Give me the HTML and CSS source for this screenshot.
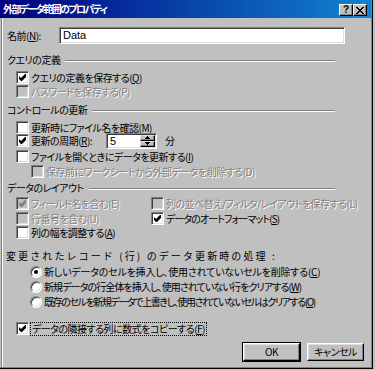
FILE: index.html
```html
<!DOCTYPE html>
<html lang="ja">
<head>
<meta charset="utf-8">
<title>外部データ範囲のプロパティ</title>
<link rel="stylesheet" href="styles.css">
</head>
<body>
<div class="window">
  <div class="inner">
    <div class="titlebar">
      <span class="title">外部データ範囲のプロパティ</span>
      <div class="tbtns">
        <span class="tbtn help">?</span>
        <span class="tbtn close"><svg width="8" height="7" viewBox="0 0 8 7" shape-rendering="crispEdges"><path d="M0 0h2v1H0zM6 0h2v1H6zM1 1h2v1H1zM5 1h2v1H5zM2 2h4v1H2zM3 3h2v1H3zM2 4h4v1H2zM1 5h2v1H1zM5 5h2v1H5zM0 6h2v1H0zM6 6h2v1H6z" fill="#000"/></svg></span>
      </div>
    </div>
    <div class="content">
      <div class="name-row">
        <span class="name-label">名前(<u>N</u>):</span>
        <div class="textbox">Data</div>
      </div>

      <div class="group-h mt9"><span>クエリの定義</span><span class="etch"></span></div>
      <div class="row lv1 mt5"><span class="cb checked"></span><span class="lbl">クエリの定義を保存する(<u>Q</u>)</span></div>
      <div class="row lv1 mt1 disabled"><span class="cb"></span><span class="lbl">パスワードを保存する(P)</span></div>

      <div class="group-h mt5"><span>コントロールの更新</span><span class="etch"></span></div>
      <div class="row lv1 mt5"><span class="cb"></span><span class="lbl">更新時にファイル名を確認(<u>M</u>)</span></div>
      <div class="row lv1"><span class="cb checked"></span><span class="lbl spin-lbl">更新の周期(<u>R</u>):</span>
        <div class="spinner"><span class="spin-val">5</span><span class="spin-btns"><span class="sbtn"><svg width="5" height="3" viewBox="0 0 5 3" shape-rendering="crispEdges"><path d="M2 0h1v1H2zM1 1h3v1H1zM0 2h5v1H0z" fill="#000"/></svg></span><span class="sbtn"><svg width="5" height="3" viewBox="0 0 5 3" shape-rendering="crispEdges"><path d="M0 0h5v1H0zM1 1h3v1H1zM2 2h1v1H2z" fill="#000"/></svg></span></span></div>
        <span class="unit">分</span>
      </div>
      <div class="row lv1 mt3"><span class="cb"></span><span class="lbl">ファイルを開くときにデータを更新する(<u>I</u>)</span></div>
      <div class="row lv2 mt2 disabled"><span class="cb"></span><span class="lbl">保存前にワークシートから外部データを削除する(D)</span></div>

      <div class="group-h mt3"><span>データのレイアウト</span><span class="etch"></span></div>
      <div class="two-col mt3">
        <div class="row disabled"><span class="cb checked"></span><span class="lbl">フィールド名を含む(E)</span></div>
        <div class="row disabled"><span class="cb"></span><span class="lbl">列の並べ替え/フィルタ/レイアウトを保存する(L)</span></div>
      </div>
      <div class="two-col mt2">
        <div class="row disabled"><span class="cb"></span><span class="lbl">行番号を含む(U)</span></div>
        <div class="row"><span class="cb checked"></span><span class="lbl narrow">データのオートフォーマット(<u>S</u>)</span></div>
      </div>
      <div class="row lv1 mt1"><span class="cb"></span><span class="lbl">列の幅を調整する(<u>A</u>)</span></div>

      <div class="row lv0 mt10"><span class="lbl wide">変更されたレコード (行) のデータ更新時の処理 :</span></div>
      <div class="row rlv mt3"><span class="rb on"></span><span class="lbl r1">新しいデータのセルを挿入し、使用されていないセルを削除する(<u>C</u>)</span></div>
      <div class="row rlv mt2"><span class="rb"></span><span class="lbl r2">新規データの行全体を挿入し、使用されていない行をクリアする(<u>W</u>)</span></div>
      <div class="row rlv mt2"><span class="rb"></span><span class="lbl r3">既存のセルを新規データで上書きし、使用されていないセルはクリアする(<u>O</u>)</span></div>

      <div class="row lv1 mt14"><span class="cb checked"></span><span class="lbl focus">データの隣接する列に数式をコピーする(<u>F</u>)</span></div>

      <div class="buttons">
        <span class="default"><span class="btn">OK</span></span>
        <span class="btn">キャンセル</span>
      </div>
    </div>
  </div>
</div>
</body>
</html>
```

FILE: styles.css
```css
* { box-sizing: border-box; margin: 0; padding: 0; }
html, body { width: 375px; height: 370px; overflow: hidden; background: #c0c0c0; }
body {
  font-family: "Noto Sans CJK JP", "Noto Sans", sans-serif;
  font-size: 10px;
  letter-spacing: -0.5px;
  line-height: 12px;
  color: #000;
  font-feature-settings: "palt";
}
u { text-decoration: underline; text-underline-offset: 1px; }

.window {
  width: 373px; height: 369px;
  border-right: 1px solid #000; border-bottom: 1px solid #000;
  display: flex; flex-direction: column;
}
.inner {
  flex: 1;
  border-right: 1px solid #808080; border-bottom: 1px solid #808080;
  display: flex; flex-direction: column;
}
.titlebar {
  height: 18px; flex: none;
  background: linear-gradient(90deg, #000080, #1084d0);
  display: flex; align-items: flex-start; justify-content: space-between;
  padding: 0 4px 0 3px;
}
.title { color: #fff; font-weight: bold; line-height: 18px; font-size: 10px; letter-spacing: -1.6px; }
.tbtns { display: flex; padding-top: 4px; }
.tbtn {
  width: 14px; height: 12px; background: #c0c0c0;
  border: 1px solid; border-color: #fff #000 #000 #fff;
  box-shadow: inset -1px -1px #808080;
  display: flex; align-items: center; justify-content: center;
  letter-spacing: 0;
}
.tbtn.help { font-family: "Liberation Sans", sans-serif; font-weight: bold; font-size: 10px; line-height: 10px; }

.content {
  flex: 1;
  margin-left: 1px;
  border-left: 1px solid #808080;
  box-shadow: inset 1px 0 #fff;
  display: flex; flex-direction: column;
}

.name-row { display: flex; align-items: center; margin: 9px 0 0 5px; height: 17px; }
.name-label { width: 52px; }
.textbox {
  width: 286px; height: 17px; background: #fff;
  border: 1px solid; border-color: #808080 #fff #fff #808080;
  box-shadow: inset 1px 1px #404040, inset -1px -1px #dfdfdf;
  padding: 1px 3px; line-height: 13px; letter-spacing: 0;
  font-family: "Liberation Sans", "Noto Sans CJK JP", sans-serif; font-size: 11px;
}

.group-h { display: flex; align-items: center; height: 13px; width: 328px; margin-left: 5px; }
.etch { flex: 1; height: 2px; margin: 3px 0 0 5px; border-top: 1px solid #808080; border-bottom: 1px solid #fff; }

.row { display: flex; align-items: center; height: 13px; white-space: nowrap; }
.lv0 { margin-left: 4px; }
.lv1 { margin-left: 14px; }
.lv2 { margin-left: 29px; }
.rlv { margin-left: 28px; }
.lbl { margin-left: 2px; }
.lv0 .lbl { margin-left: 0; }
.wide { font-feature-settings: normal; letter-spacing: 2.1px; }
.r1 { letter-spacing: -0.2px; }
.r2 { letter-spacing: -0.9px; }
.r3 { letter-spacing: -1.4px; }
.narrow { letter-spacing: -0.9px; }

.mt1 { margin-top: 1px; } .mt2 { margin-top: 2px; } .mt3 { margin-top: 3px; }
.mt5 { margin-top: 5px; } .mt9 { margin-top: 9px; } .mt10 { margin-top: 10px; }
.mt14 { margin-top: 14px; }

.cb {
  width: 13px; height: 13px; flex: none; background: #fff; position: relative;
  border: 1px solid; border-color: #808080 #fff #fff #808080;
  box-shadow: inset 1px 1px #404040, inset -1px -1px #dfdfdf;
}
.cb.checked::after {
  content: ""; position: absolute; left: 2px; top: 2px; width: 7px; height: 7px;
  background: #000;
  clip-path: polygon(0 28.6%, 28.6% 57.1%, 85.7% 0, 100% 0, 100% 42.9%, 42.9% 100%, 28.6% 100%, 0 71.4%);
}
.disabled { color: #808080; }
.disabled .lbl { text-shadow: 1px 1px 0 #fff; }
.disabled .cb { background: #c0c0c0; }
.disabled .cb.checked::after { background: #808080; }

.two-col { display: grid; grid-template-columns: 135px auto; margin-left: 14px; }

.spin-lbl { width: 75px; }
.spinner {
  width: 51px; height: 16px; flex: none; background: #fff; display: flex; justify-content: space-between;
  border: 1px solid; border-color: #808080 #fff #fff #808080;
  box-shadow: inset 1px 1px #404040, inset -1px -1px #dfdfdf;
  padding: 1px;
}
.spin-val { padding: 0 2px; line-height: 12px; font-family: "Liberation Sans", sans-serif; font-size: 11px; letter-spacing: 0; }
.spin-btns { display: flex; flex-direction: column; width: 15px; }
.sbtn {
  flex: 1; background: #c0c0c0; display: flex; align-items: center; justify-content: center;
  border: 1px solid; border-color: #dfdfdf #000 #000 #dfdfdf;
  box-shadow: inset -1px -1px #808080;
}
.sbtn svg { display: block; }
.unit { margin-left: 8px; }

.rb {
  width: 12px; height: 12px; flex: none; border-radius: 50%; background: #fff; position: relative;
  border: 1px solid; border-color: #808080 #fff #fff #808080;
  box-shadow: inset 1px 1px #404040, inset -1px -1px #dfdfdf;
}
.rb.on::after {
  content: ""; position: absolute; left: 3px; top: 3px; width: 4px; height: 4px; border-radius: 50%; background: #000;
}

.focus { outline: 1px dotted #000; outline-offset: 0; padding: 0 1px; }

.buttons { display: flex; justify-content: flex-end; align-items: center; gap: 6px; margin-top: 7px; padding-right: 7px; }
.default { border: 1px solid #000; display: flex; flex: none; }
.btn {
  width: 57px; height: 18px; flex: none; display: flex; align-items: center; justify-content: center;
  border: 1px solid; border-color: #fff #000 #000 #fff;
  box-shadow: inset -1px -1px #808080, inset 1px 1px #dfdfdf;
  background: #c0c0c0;
}
```
